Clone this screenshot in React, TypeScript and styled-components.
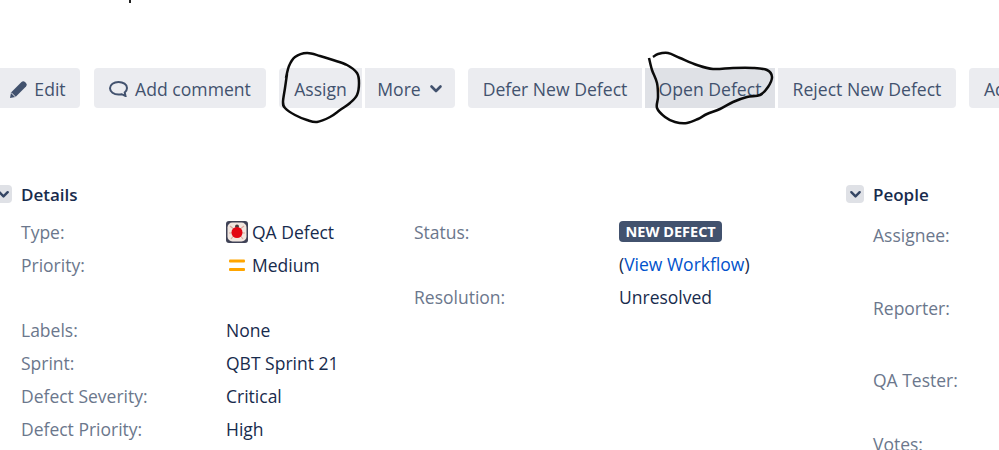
import React from "react";
import styled, { createGlobalStyle } from "styled-components";

const GlobalStyle = createGlobalStyle`
  html, body {
    margin: 0;
    padding: 0;
    background: #fff;
  }
  body {
    font-family: "Open Sans", "Noto Sans", sans-serif;
    color: #172b4d;
  }
`;

const Page = styled.div`
  position: relative;
  width: 999px;
  height: 450px;
  overflow: hidden;
  background: #fff;
`;

const Toolbar = styled.div`
  display: flex;
  margin: 68px 0 0 -4px;
  width: 1100px;
`;

const Group = styled.div<{ $after?: number }>`
  display: flex;
  gap: 3px;
  margin-right: ${(p) => p.$after ?? 13}px;
`;

const Button = styled.div<{
  $w: number;
  $active?: boolean;
  $gap?: number;
  $start?: boolean;
  $square?: "left" | "right" | "both";
}>`
  display: flex;
  align-items: center;
  justify-content: ${(p) => (p.$start ? "flex-start" : "center")};
  padding: 1px 0 0 ${(p) => (p.$start ? "15px" : "0")};
  box-sizing: border-box;
  gap: ${(p) => p.$gap ?? 7}px;
  width: ${(p) => p.$w}px;
  height: 40px;
  font-size: 17.6px;
  color: #42526e;
  white-space: nowrap;
  background: ${(p) => (p.$active ? "#dfe1e6" : "#ebecf0")};
  border-radius: ${(p) =>
    p.$square === "both" ? "0" : p.$square === "left" ? "0 4px 4px 0" : p.$square === "right" ? "4px 0 0 4px" : "4px"};
`;

const Body = styled.div`
  display: flex;
  margin-top: 71px;
`;

const Details = styled.section`
  width: 846px;
  flex: none;
`;

const People = styled.section`
  flex: 1;
`;

const Heading = styled.div<{ $offset?: number }>`
  display: flex;
  align-items: center;
  gap: 9px;
  height: 30px;
  margin-left: ${(p) => p.$offset ?? 0}px;
  font-size: 17px;
  font-weight: 600;
  color: #172b4d;
`;

const Toggle = styled.div`
  display: flex;
  align-items: center;
  justify-content: center;
  width: 18px;
  height: 18px;
  border-radius: 4px;
  background: #dfe1e6;
`;

const Columns = styled.div`
  display: flex;
  margin-top: 6px;
  padding-left: 21px;
`;

const Field = styled.div<{ $h?: number }>`
  display: flex;
  align-items: center;
  height: ${(p) => p.$h ?? 33}px;
  font-size: 17.5px;
`;

const Label = styled.div<{ $w: number }>`
  width: ${(p) => p.$w}px;
  flex: none;
  color: #6b778c;
`;

const Value = styled.div`
  display: flex;
  align-items: center;
  gap: 4px;
  color: #172b4d;
`;

const Column = styled.div<{ $w: number }>`
  width: ${(p) => p.$w}px;
  flex: none;
`;

const Lozenge = styled.span`
  display: inline-block;
  padding: 0 6.500px;
  height: 21px;
  line-height: 21px;
  border-radius: 4px;
  background: #42526e;
  color: #fff;
  font-size: 14.5px;
  font-weight: 700;
`;

const WorkflowLink = styled.span`
  color: #172b4d;
  a {
    color: #0052cc;
    text-decoration: none;
  }
`;

const PeopleList = styled.div`
  padding-left: 27px;
  margin-top: 14px;
`;

const PeopleRow = styled.div<{ $h: number }>`
  height: ${(p) => p.$h}px;
  font-size: 17.5px;
  color: #6b778c;
`;

const Scribbles = styled.svg`
  position: absolute;
  inset: 0;
  pointer-events: none;
`;

const PencilIcon = () => (
  <svg width="18" height="18" viewBox="0 0 18 18">
    <path d="M0 18l1-5.500L11.500 2a2.500 2.500 0 0 1 3.500 0l1 1a2.500 2.500 0 0 1 0 3.500L5.500 17z" fill="#42526e" />
    <path d="M1 12.500l4.500 4.500" stroke="#ebecf0" strokeWidth="1" />
  </svg>
);

const CommentIcon = () => (
  <svg width="19" height="16" viewBox="0 0 19 16" fill="none">
    <path
      d="M9.500 1C14.200 1 18 3.500 18 7c0 1.800-1 3.300-2.300 4.400l.8 3.600-3.800-1.800c-1 .3-2 .4-3.200.4C4.800 13.600 1 10.700 1 7.200S4.800 1 9.500 1z"
      stroke="#42526e"
      strokeWidth="2"
    />
  </svg>
);

const Chevron = ({ size = 14, color = "#42526e" }: { size?: number; color?: string }) => (
  <svg width={size} height={size} viewBox="0 0 14 14" fill="none">
    <path d="M2.500 4.500L7 9l4.500-4.500" stroke={color} strokeWidth="2.600" strokeLinecap="round" strokeLinejoin="round" />
  </svg>
);

const BugIcon = () => (
  <svg width="22" height="22" viewBox="0 0 22 22">
    <rect width="22" height="22" rx="3" fill="#3f4256" />
    <rect x="1.500" y="1.500" width="19" height="19" rx="5" fill="#f1e6df" />
    <path d="M4 5l5 4M18 5l-5 4M3 12h6M19 12h-6M5 18l4-5M17 18l-4-5" stroke="#d9a9a0" strokeWidth="1.200" />
    <circle cx="11" cy="5.500" r="2" fill="#4a3a3a" />
    <circle cx="11" cy="11.500" r="5.500" fill="#e30613" />
  </svg>
);

const MediumIcon = () => (
  <svg width="22" height="16" viewBox="0 0 22 16">
    <rect x="3" y="2.500" width="16" height="3" rx="1" fill="#ffa500" />
    <rect x="3" y="11" width="16" height="3" rx="1" fill="#ffa500" />
  </svg>
);

// runs a smooth curve through the hand-drawn points
const smooth = (pts: number[][]) => {
  let d = `M${pts[0][0]} ${pts[0][1]}`;
  for (let i = 0; i < pts.length - 1; i++) {
    const p0 = pts[i - 1] ?? pts[i];
    const p1 = pts[i];
    const p2 = pts[i + 1];
    const p3 = pts[i + 2] ?? p2;
    const c1x = p1[0] + (p2[0] - p0[0]) / 6;
    const c1y = p1[1] + (p2[1] - p0[1]) / 6;
    const c2x = p2[0] - (p3[0] - p1[0]) / 6;
    const c2y = p2[1] - (p3[1] - p1[1]) / 6;
    d += `C${c1x} ${c1y} ${c2x} ${c2y} ${p2[0]} ${p2[1]}`;
  }
  return d;
};

const assignMark = [
  [286, 78], [289, 66], [295, 57], [307, 53], [320, 56], [333, 60], [347, 65], [357, 73], [359, 83],
  [357, 95], [350, 103], [340, 110], [330, 117], [317, 122], [307, 120], [295, 115], [285, 108],
  [283, 102], [285, 88], [287, 74],
];

const openMark = [
  [649, 58], [652, 70], [657, 83], [658, 97], [657, 108], [665, 117], [675, 122], [687, 123], [698, 119],
  [707, 114], [720, 109], [733, 102], [747, 97], [760, 95], [768, 87], [772, 77], [767, 70], [753, 68],
  [733, 68], [713, 69], [697, 65], [680, 58], [668, 53], [658, 54], [653, 57],
];

const leftFields = [
  { label: "Labels:", value: "None" },
  { label: "Sprint:", value: "QBT Sprint 21" },
  { label: "Defect Severity:", value: "Critical" },
  { label: "Defect Priority:", value: "High" },
];

export default function App() {
  return (
    <Page>
      <GlobalStyle />
      <Toolbar>
        <Group $after={14}>
          <Button $w={84} $gap={6}>
            <PencilIcon />
            Edit
          </Button>
        </Group>
        <Group>
          <Button $w={172}>
            <CommentIcon />
            Add comment
          </Button>
        </Group>
        <Group>
          <Button $w={83} $square="right">Assign</Button>
          <Button $w={90} $gap={8} $square="left">
            More
            <Chevron />
          </Button>
        </Group>
        <Group>
          <Button $w={174} $square="right">Defer New Defect</Button>
          <Button $w={130} $active $square="both">Open Defect</Button>
          <Button $w={178} $square="left">Reject New Defect</Button>
        </Group>
        <Group>
          <Button $w={140} $start>Add</Button>
        </Group>
      </Toolbar>

      <Body>
        <Details>
          <Heading $offset={-6}>
            <Toggle>
              <Chevron size={13} color="#344563" />
            </Toggle>
            Details
          </Heading>
          <Columns>
            <Column $w={393}>
              <Field>
                <Label $w={205}>Type:</Label>
                <Value>
                  <BugIcon />
                  QA Defect
                </Value>
              </Field>
              <Field $h={33}>
                <Label $w={205}>Priority:</Label>
                <Value>
                  <MediumIcon />
                  Medium
                </Value>
              </Field>
              <Field $h={32} />
              {leftFields.map((f) => (
                <Field key={f.label}>
                  <Label $w={205}>{f.label}</Label>
                  <Value>{f.value}</Value>
                </Field>
              ))}
            </Column>
            <Column $w={400}>
              <Field>
                <Label $w={205}>Status:</Label>
                <Value>
                  <Lozenge>NEW DEFECT</Lozenge>
                </Value>
              </Field>
              <Field $h={31}>
                <Label $w={205} />
                <WorkflowLink>
                  (<a href="#">View Workflow</a>)
                </WorkflowLink>
              </Field>
              <Field $h={36}>
                <Label $w={205}>Resolution:</Label>
                <Value>Unresolved</Value>
              </Field>
            </Column>
          </Columns>
        </Details>
        <People>
          <Heading>
            <Toggle>
              <Chevron size={13} color="#344563" />
            </Toggle>
            People
          </Heading>
          <PeopleList>
            <PeopleRow $h={73}>Assignee:</PeopleRow>
            <PeopleRow $h={72}>Reporter:</PeopleRow>
            <PeopleRow $h={64}>QA Tester:</PeopleRow>
            <PeopleRow $h={30}>Votes:</PeopleRow>
          </PeopleList>
        </People>
      </Body>

      {/* pen marks drawn over the screenshot */}
      <Scribbles width="999" height="450" viewBox="0 0 999 450" fill="none">
        <path d="M130 0v3" stroke="#222" strokeWidth="2" />
        <path d={smooth(assignMark)} stroke="#0b0b0b" strokeWidth="2.500" strokeLinejoin="round" />
        <path d={smooth(openMark)} stroke="#0b0b0b" strokeWidth="2.500" strokeLinejoin="round" />
      </Scribbles>
    </Page>
  );
}
